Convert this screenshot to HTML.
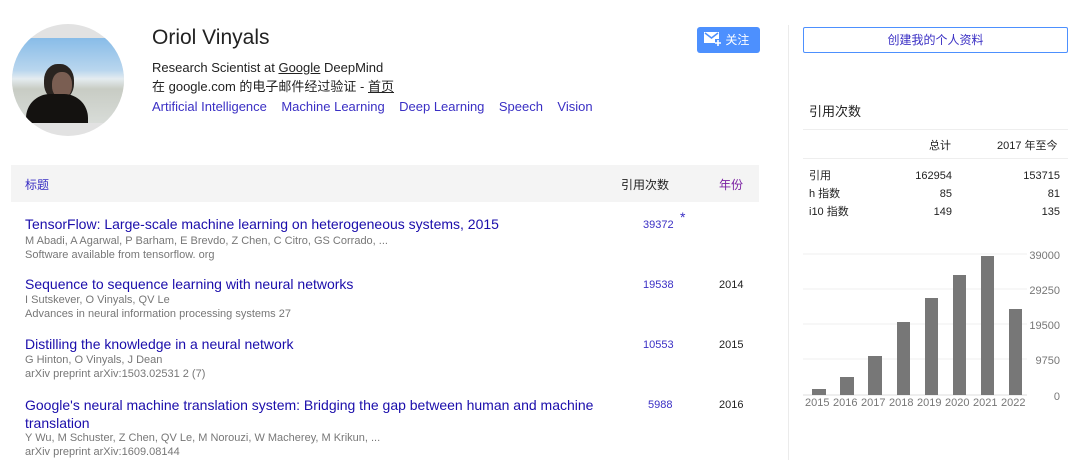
<!DOCTYPE html>
<html><head><meta charset="utf-8"><style>
*{margin:0;padding:0;box-sizing:border-box}
body{width:1080px;height:460px;background:#fff;font-family:"Liberation Sans","Noto Sans CJK SC",sans-serif;position:relative;overflow:hidden;color:#222}
.a{position:absolute;white-space:nowrap}
.l{color:#3a2fc4}
.t{color:#1a0dab;font-size:14px}
.g{color:#777;font-size:11px}
.n{color:#3a2fc4;font-size:11px}
.k{font-size:11px;color:#222}
</style></head><body>
<div class="a" style="left:12px;top:24px;width:112px;height:112px;border-radius:50%;background:#e2e2e2;overflow:hidden">
 <div style="position:absolute;left:0;top:14px;width:112px;height:85px;background:linear-gradient(#88bce8 0%,#b9d6ee 38%,#e4ecf0 48%,#c8ccc4 60%,#d8dcd8 100%)"></div>
 <div style="position:absolute;left:32px;top:40px;width:30px;height:36px;border-radius:45%;background:#2a2420"></div>
 <div style="position:absolute;left:40px;top:48px;width:20px;height:26px;border-radius:45%;background:#7a5e52"></div>
 <div style="position:absolute;left:14px;top:70px;width:62px;height:29px;border-radius:24px 24px 0 0;background:#141210"></div>
</div>
<div class="a" style="left:152px;top:26px;font-size:21px;color:#222">Oriol Vinyals</div>
<div class="a" style="left:152px;top:60px;font-size:13px">Research Scientist at <u>Google</u> DeepMind</div>
<div class="a" style="left:152px;top:76px;font-size:13px">在 google.com 的电子邮件经过验证 - <u>首页</u></div>
<div class="a l" style="left:152px;top:99px;font-size:13px">Artificial Intelligence&nbsp;&nbsp;&nbsp;&nbsp;Machine Learning&nbsp;&nbsp;&nbsp;&nbsp;Deep Learning&nbsp;&nbsp;&nbsp;&nbsp;Speech&nbsp;&nbsp;&nbsp;&nbsp;Vision</div>
<div class="a" style="left:697px;top:27px;width:63px;height:26px;background:#4d90fe;border-radius:3px;color:#fff;font-size:12px;line-height:26px;padding-left:7px">
<svg width="18" height="14" viewBox="0 0 18 14" style="vertical-align:-2px"><path d="M0 0h15v7h-4v4H0z" fill="#fff"/><path d="M1 1l6.5 5 6.5-5" stroke="#4d90fe" stroke-width="1.5" fill="none"/><path d="M14 8v6M11 11h6" stroke="#fff" stroke-width="1.6"/></svg> 关注</div>
<div class="a" style="left:788px;top:25px;width:1px;height:435px;background:#ebebeb"></div>
<div class="a" style="left:803px;top:27px;width:265px;height:26px;border:1px solid #4d90fe;border-radius:2px;color:#3a2fc4;font-size:12px;text-align:center;line-height:24px">创建我的个人资料</div>
<div class="a" style="left:809px;top:101px;font-size:13px">引用次数</div>
<div class="a" style="left:803px;top:129px;width:265px;height:1px;background:#eee"></div>
<div class="a" style="left:803px;top:158px;width:265px;height:1px;background:#eee"></div>
<div class="a k" style="left:929px;top:137px">总计</div>
<div class="a k" style="left:997px;top:137px">2017 年至今</div>
<div class="a k" style="left:809px;top:167px;line-height:18px">引用<br>h 指数<br>i10 指数</div>
<div class="a k" style="left:900px;width:52px;text-align:right;top:167px;line-height:18px">162954<br>85<br>149</div>
<div class="a k" style="left:1000px;width:60px;text-align:right;top:167px;line-height:18px">153715<br>81<br>135</div>
<svg class="a" style="left:790px;top:240px" width="290" height="180">
<g stroke="#efefef"><line x1="13" y1="14" x2="237" y2="14"/><line x1="13" y1="49" x2="237" y2="49"/><line x1="13" y1="84" x2="237" y2="84"/><line x1="13" y1="119" x2="237" y2="119"/><line x1="13" y1="155" x2="237" y2="155" stroke="#ddd"/></g>
<g fill="#777"><rect x="22" y="149" width="14" height="6"/><rect x="50" y="137" width="14" height="18"/><rect x="78" y="116" width="14" height="39"/><rect x="107" y="82" width="13" height="73"/><rect x="135" y="58" width="13" height="97"/><rect x="163" y="35" width="13" height="120"/><rect x="191" y="16" width="13" height="139"/><rect x="219" y="69" width="13" height="86"/></g>
<g font-family="Liberation Sans" font-size="11" fill="#777"><text x="15" y="166">2015</text><text x="43" y="166">2016</text><text x="71" y="166">2017</text><text x="99" y="166">2018</text><text x="127" y="166">2019</text><text x="155" y="166">2020</text><text x="183" y="166">2021</text><text x="211" y="166">2022</text>
<g text-anchor="end"><text x="270" y="19">39000</text><text x="270" y="54">29250</text><text x="270" y="89">19500</text><text x="270" y="124">9750</text><text x="270" y="160">0</text></g></g>
</svg>
<div class="a" style="left:11px;top:165px;width:748px;height:37px;background:#f4f4f4"></div>
<div class="a l" style="left:25px;top:176px;font-size:12px">标题</div>
<div class="a" style="left:621px;top:176px;font-size:12px">引用次数</div>
<div class="a" style="left:719px;top:176px;font-size:12px;color:#7a1fa2">年份</div>

<div class="a t" style="left:25px;top:216px">TensorFlow: Large-scale machine learning on heterogeneous systems, 2015</div>
<div class="a g" style="left:25px;top:235px">M Abadi, A Agarwal, P Barham, E Brevdo, Z Chen, C Citro, GS Corrado, ...</div>
<div class="a g" style="left:25px;top:249px">Software available from tensorflow. org</div>
<div class="a n" style="left:643px;top:219px">39372</div><div class="a n" style="left:680px;top:209px;font-size:14px">*</div>

<div class="a t" style="left:25px;top:276px">Sequence to sequence learning with neural networks</div>
<div class="a g" style="left:25px;top:294px">I Sutskever, O Vinyals, QV Le</div>
<div class="a g" style="left:25px;top:308px">Advances in neural information processing systems 27</div>
<div class="a n" style="left:643px;top:279px">19538</div><div class="a k" style="left:719px;top:279px">2014</div>

<div class="a t" style="left:25px;top:336px">Distilling the knowledge in a neural network</div>
<div class="a g" style="left:25px;top:354px">G Hinton, O Vinyals, J Dean</div>
<div class="a g" style="left:25px;top:368px">arXiv preprint arXiv:1503.02531 2 (7)</div>
<div class="a n" style="left:643px;top:339px">10553</div><div class="a k" style="left:719px;top:339px">2015</div>

<div class="a t" style="left:25px;top:396px;line-height:18px">Google's neural machine translation system: Bridging the gap between human and machine<br>translation</div>
<div class="a g" style="left:25px;top:432px">Y Wu, M Schuster, Z Chen, QV Le, M Norouzi, W Macherey, M Krikun, ...</div>
<div class="a g" style="left:25px;top:446px">arXiv preprint arXiv:1609.08144</div>
<div class="a n" style="left:648px;top:399px">5988</div><div class="a k" style="left:719px;top:399px">2016</div>
</body></html>
